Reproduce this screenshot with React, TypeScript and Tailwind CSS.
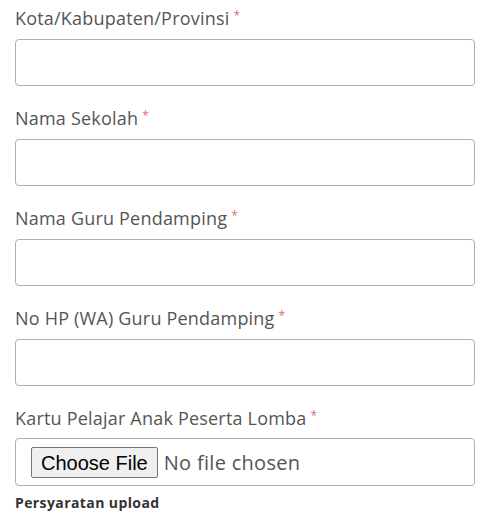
const fields = [
  'Kota/Kabupaten/Provinsi',
  'Nama Sekolah',
  'Nama Guru Pendamping',
  'No HP (WA) Guru Pendamping',
];

function FieldLabel({ text }: { text: string }) {
  return (
    <label className="block h-[24px] text-[18px] leading-[24px] tracking-[0.2px] text-[#555]">
      {text}
      <span className="relative top-[2px] ml-[4px] align-top text-[12px] leading-[16px] text-[#e06c6c]">*</span>
    </label>
  );
}

export default function App() {
  return (
    <div className="min-h-[517px] bg-white pl-[15px] pr-[17px] pt-[6px] font-['Open_Sans',sans-serif]">
      {fields.map((field) => (
        <div key={field} className="mb-[20px]">
          <FieldLabel text={field} />
          <input
            type="text"
            className="mt-[9px] block h-[47px] w-full rounded-[4px] border border-[#b0b0b0] bg-white px-3 text-[17px] outline-none"
          />
        </div>
      ))}

      <div>
        <FieldLabel text="Kartu Pelajar Anak Peserta Lomba" />
        <div className="mt-[8px] flex h-[48px] w-full items-center rounded-[4px] border border-[#b0b0b0] bg-white pl-[15px]">
          <input
            type="file"
            className="w-[440px] text-[20px] tracking-[0.3px] text-[#555] file:mr-[6px] file:h-[31px] file:rounded-[2px] file:border file:border-[#767676] file:bg-[#efefef] file:px-[9px] file:font-['Liberation_Sans',sans-serif] file:tracking-normal file:text-black"
          />
        </div>
        <p className="mt-[7px] text-[14px] font-bold leading-[20px] tracking-[0.4px] text-[#333]">Persyaratan upload</p>
      </div>
    </div>
  );
}
